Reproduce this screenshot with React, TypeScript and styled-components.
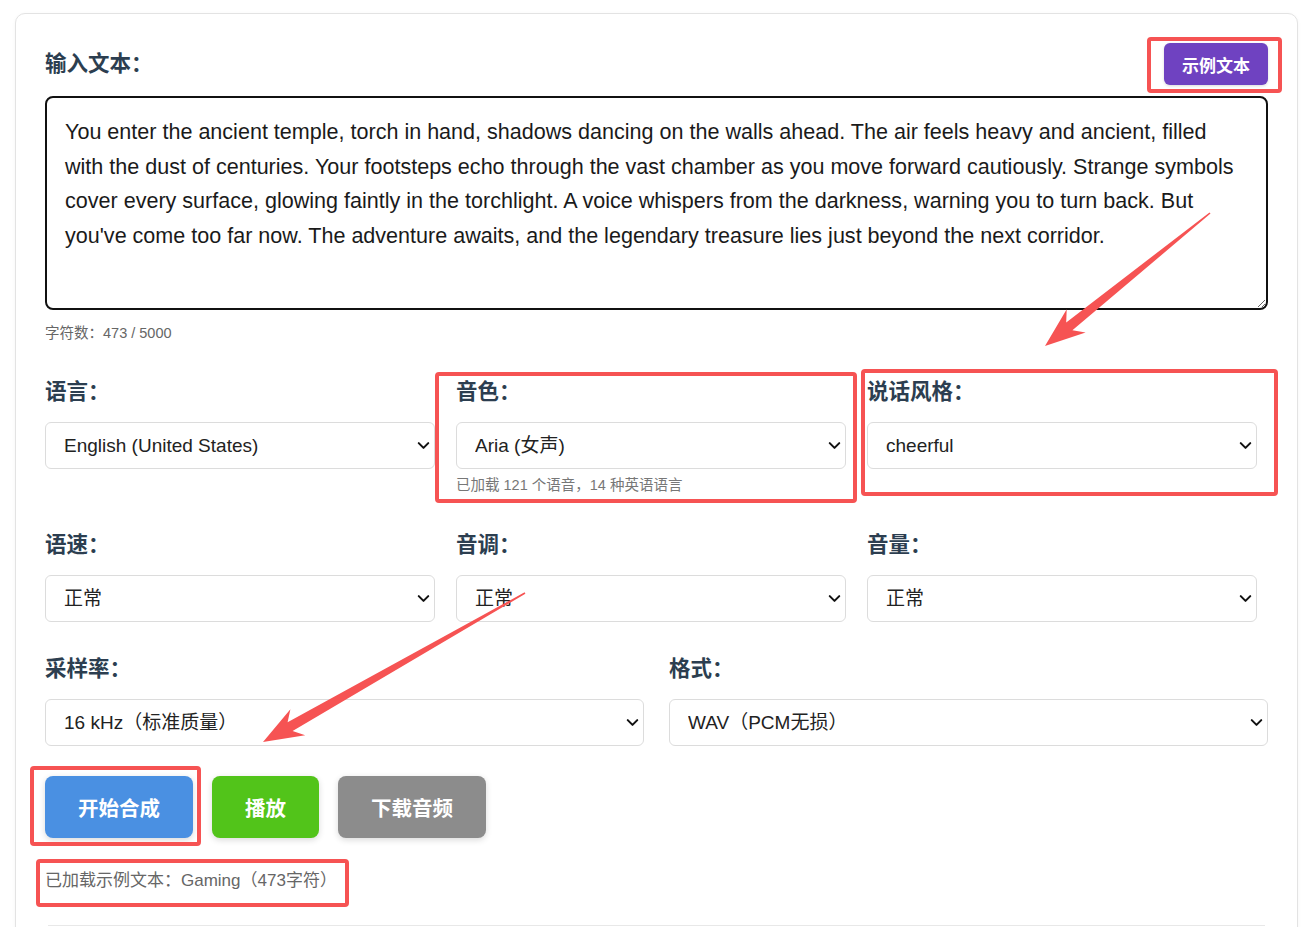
import React from 'react';
import styled, { createGlobalStyle } from 'styled-components';
import { ChevronDown } from 'lucide-react';

const GlobalStyle = createGlobalStyle`
  html, body {
    margin: 0;
    padding: 0;
    background: #ffffff;
    overflow: hidden;
  }
  body {
    font-family: "Liberation Sans", "Noto Sans CJK SC", sans-serif;
    color: #222;
  }
`;

const Page = styled.div`
  position: relative;
  padding: 13px 13px 0 15px;
  min-height: 927px;
  box-sizing: border-box;
`;

const Card = styled.div`
  border: 1px solid #e3e3e3;
  border-radius: 10px;
  padding: 29px 29px 40px;
  background: #fff;
  box-shadow: 0 1px 4px rgba(0, 0, 0, 0.04);
`;

const HeaderRow = styled.div`
  display: flex;
  justify-content: space-between;
  align-items: center;
  margin-bottom: 11px;
`;

const Heading = styled.div`
  font-size: 21.5px;
  font-weight: 700;
  line-height: 26px;
  color: #2c3e50;
`;

const SampleButton = styled.button`
  height: 42px;
  padding: 0 18px;
  border: none;
  border-radius: 6px;
  background: #6f42c1;
  color: #fff;
  font-family: inherit;
  font-size: 17px;
  font-weight: 700;
  box-shadow: 0 1px 3px rgba(0, 0, 0, 0.15);
`;

const TextArea = styled.textarea`
  display: block;
  width: 100%;
  height: 214px;
  box-sizing: border-box;
  border: 2px solid #111;
  border-radius: 8px;
  padding: 17px 22px 17px 18px;
  font-family: "Liberation Sans", "Noto Sans CJK SC", sans-serif;
  font-size: 21.55px;
  line-height: 34.5px;
  color: #1a1a1a;
  outline: none;
  resize: vertical;
`;

const CharCount = styled.div`
  margin-top: 14px;
  font-size: 14.5px;
  line-height: 18px;
  color: #666;
`;

const FieldRow = styled.div<{ $cols: string; $gap: number; $top: number }>`
  display: grid;
  grid-template-columns: ${(p) => p.$cols};
  column-gap: ${(p) => p.$gap}px;
  margin-top: ${(p) => p.$top}px;
  align-items: start;
`;

const Field = styled.div`
  display: flex;
  flex-direction: column;
`;

const Label = styled.label`
  font-size: 21.5px;
  font-weight: 700;
  line-height: 24px;
  color: #2c3e50;
  margin-bottom: 18px;
`;

const SelectWrap = styled.div`
  position: relative;
  display: flex;
  align-items: center;

  svg {
    position: absolute;
    right: 2px;
    pointer-events: none;
    color: #111;
  }
`;

const Select = styled.select`
  appearance: none;
  height: 47px;
  width: 100%;
  box-sizing: border-box;
  border: 1px solid #dcdcdc;
  border-radius: 6px;
  padding: 0 30px 0 18px;
  background: #fff;
  font-family: "Liberation Sans", "Noto Sans CJK SC", sans-serif;
  font-size: 19px;
  color: #222;
`;

const Hint = styled.div`
  margin-top: 7px;
  font-size: 14.5px;
  line-height: 18px;
  color: #777;
`;

const ButtonRow = styled.div`
  display: flex;
  gap: 19px;
  margin-top: 30px;
`;

const ActionButton = styled.button<{ $bg: string }>`
  height: 62px;
  padding: 0 33px;
  border: none;
  border-radius: 8px;
  background: ${(p) => p.$bg};
  color: #fff;
  font-family: inherit;
  font-size: 20.5px;
  font-weight: 700;
  box-shadow: 0 2px 6px rgba(0, 0, 0, 0.15);
`;

const Status = styled.div`
  margin-top: 32px;
  font-size: 17px;
  line-height: 22px;
  color: #666;
`;

const Divider = styled.div`
  margin: 33px 3px 0;
  border-top: 1px solid #e8e8e8;
`;

const Overlay = styled.svg`
  position: absolute;
  top: 0;
  left: 0;
  pointer-events: none;
`;

const RED = '#f65353';

const boxes = [
  { x: 1147, y: 37, w: 135, h: 56 },
  { x: 435, y: 372, w: 422, h: 131 },
  { x: 861, y: 369, w: 417, h: 127 },
  { x: 30, y: 766, w: 171, h: 80 },
  { x: 36, y: 859, w: 313, h: 48 },
];

// tapered arrow from tail (tx,ty) to tip (px,py)
function arrowPoints(tx: number, ty: number, px: number, py: number) {
  const dx = px - tx;
  const dy = py - ty;
  const len = Math.hypot(dx, dy);
  const ux = dx / len;
  const uy = dy / len;
  const nx = -uy;
  const ny = ux;
  const headLen = 40;
  const headHalf = 15;
  const neckHalf = 5;
  const tailHalf = 0.8;
  const bx = px - ux * headLen;
  const by = py - uy * headLen;
  const kx = px - ux * (headLen * 0.78);
  const ky = py - uy * (headLen * 0.78);
  const pts = [
    [tx + nx * tailHalf, ty + ny * tailHalf],
    [kx + nx * neckHalf, ky + ny * neckHalf],
    [bx + nx * headHalf, by + ny * headHalf],
    [px, py],
    [bx - nx * headHalf, by - ny * headHalf],
    [kx - nx * neckHalf, ky - ny * neckHalf],
    [tx - nx * tailHalf, ty - ny * tailHalf],
  ];
  return pts.map((p) => p.map((v) => v.toFixed(1)).join(',')).join(' ');
}

const sampleText =
  "You enter the ancient temple, torch in hand, shadows dancing on the walls ahead. The air feels heavy and ancient, filled with the dust of centuries. Your footsteps echo through the vast chamber as you move forward cautiously. Strange symbols cover every surface, glowing faintly in the torchlight. A voice whispers from the darkness, warning you to turn back. But you've come too far now. The adventure awaits, and the legendary treasure lies just beyond the next corridor.";

function Dropdown({ value }: { value: string }) {
  return (
    <SelectWrap>
      <Select defaultValue={value}>
        <option value={value}>{value}</option>
      </Select>
      <ChevronDown size={19} strokeWidth={2.6} />
    </SelectWrap>
  );
}

export default function App() {
  return (
    <Page>
      <GlobalStyle />
      <Card>
        <HeaderRow>
          <Heading>输入文本：</Heading>
          <SampleButton>示例文本</SampleButton>
        </HeaderRow>
        <TextArea defaultValue={sampleText} />
        <CharCount>字符数：473 / 5000</CharCount>

        <FieldRow $cols="repeat(3, 390px)" $gap={21} $top={38}>
          <Field>
            <Label>语言：</Label>
            <Dropdown value="English (United States)" />
          </Field>
          <Field>
            <Label>音色：</Label>
            <Dropdown value="Aria (女声)" />
            <Hint>已加载 121 个语音，14 种英语语言</Hint>
          </Field>
          <Field>
            <Label>说话风格：</Label>
            <Dropdown value="cheerful" />
          </Field>
        </FieldRow>

        <FieldRow $cols="repeat(3, 390px)" $gap={21} $top={39}>
          <Field>
            <Label>语速：</Label>
            <Dropdown value="正常" />
          </Field>
          <Field>
            <Label>音调：</Label>
            <Dropdown value="正常" />
          </Field>
          <Field>
            <Label>音量：</Label>
            <Dropdown value="正常" />
          </Field>
        </FieldRow>

        <FieldRow $cols="1fr 1fr" $gap={25} $top={35}>
          <Field>
            <Label>采样率：</Label>
            <Dropdown value="16 kHz（标准质量）" />
          </Field>
          <Field>
            <Label>格式：</Label>
            <Dropdown value="WAV（PCM无损）" />
          </Field>
        </FieldRow>

        <ButtonRow>
          <ActionButton $bg="#4a90e2">开始合成</ActionButton>
          <ActionButton $bg="#52c41a">播放</ActionButton>
          <ActionButton $bg="#8c8c8c">下载音频</ActionButton>
        </ButtonRow>
        <Status>已加载示例文本：Gaming（473字符）</Status>
        <Divider />
      </Card>

      <Overlay width={1311} height={927} viewBox="0 0 1311 927">
        {boxes.map((b, i) => (
          <rect
            key={i}
            x={b.x + 2}
            y={b.y + 2}
            width={b.w - 4}
            height={b.h - 4}
            rx={2}
            fill="none"
            stroke={RED}
            strokeWidth={4}
          />
        ))}
        <polygon points={arrowPoints(1210, 213, 1045, 346)} fill={RED} />
        <polygon points={arrowPoints(525, 593, 263, 742)} fill={RED} />
      </Overlay>
    </Page>
  );
}
